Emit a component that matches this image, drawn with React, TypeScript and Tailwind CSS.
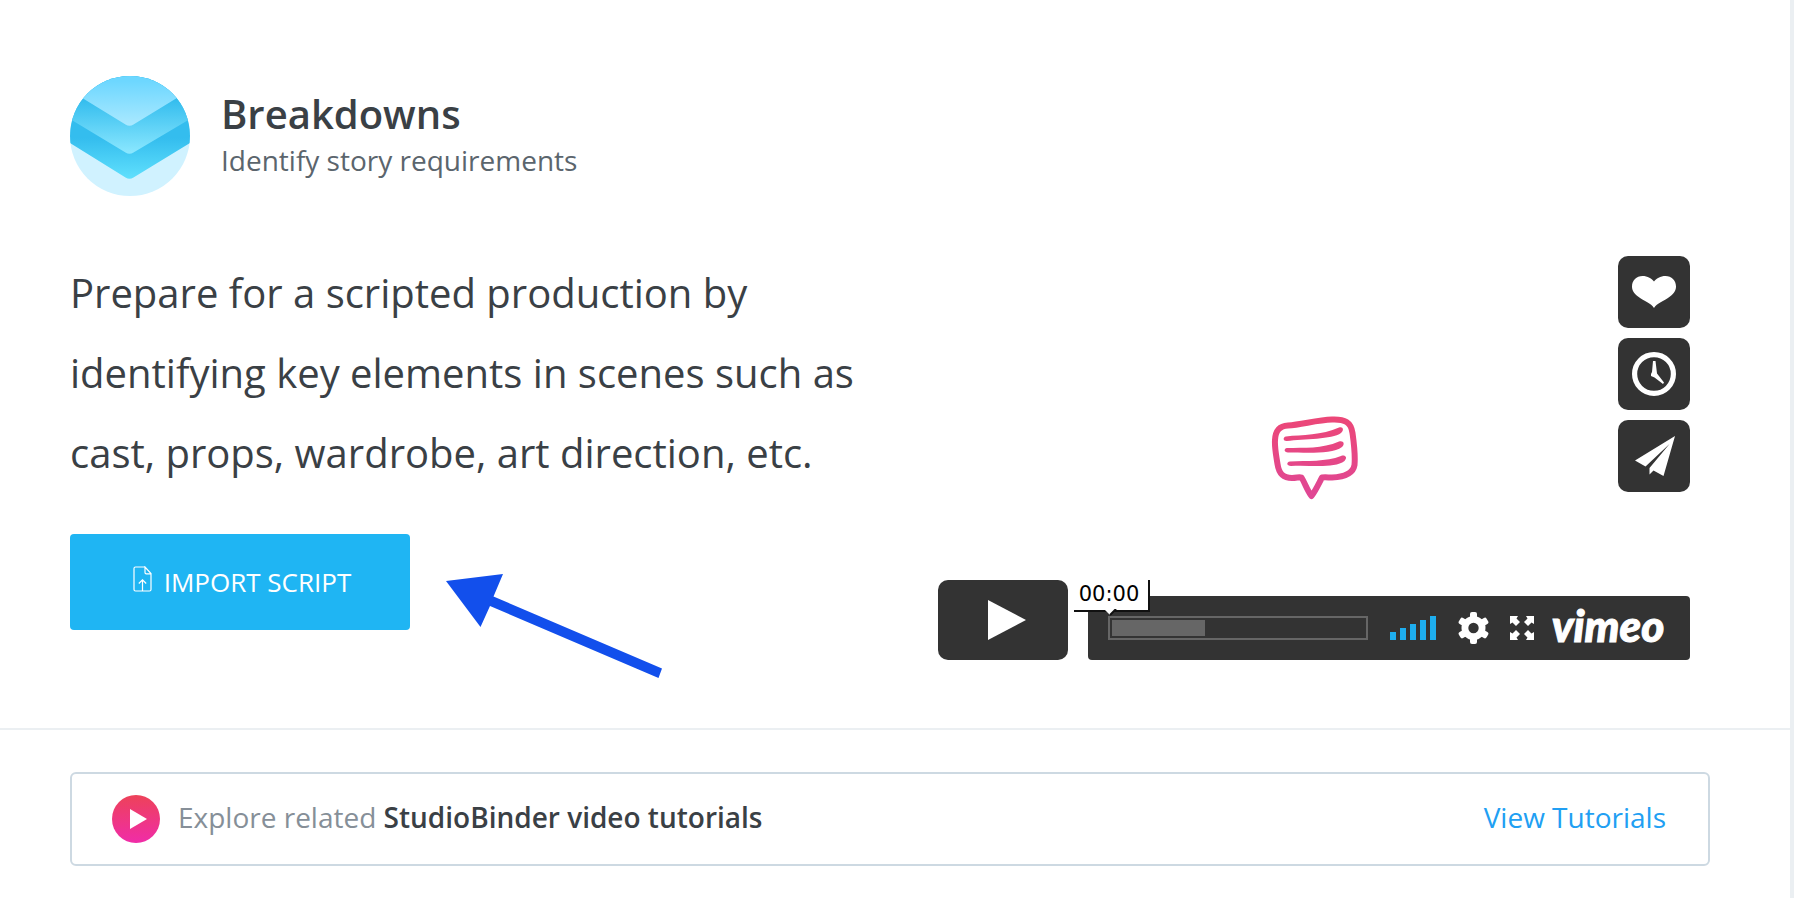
const sideButton =
  "flex size-[72px] cursor-pointer items-center justify-center rounded-[10px] bg-[#333333]";

// round badge next to the page title
const BreakdownLogo: React.FC = () => (
  <svg className="size-[120px] shrink-0" viewBox="0 0 120 120" aria-hidden="true">
    <defs>
      <clipPath id="logoClip">
        <circle cx="60" cy="60" r="60" />
      </clipPath>
      <linearGradient id="layerTop" gradientUnits="userSpaceOnUse" x1="0" y1="0" x2="0" y2="50">
        <stop offset="0.1" stopColor="#6dd7ff" />
        <stop offset="1" stopColor="#abe9ff" />
      </linearGradient>
      <linearGradient id="layerMiddle" gradientUnits="userSpaceOnUse" x1="0" y1="24" x2="0" y2="78">
        <stop offset="0" stopColor="#34bdee" />
        <stop offset="1" stopColor="#8ce8ff" />
      </linearGradient>
      <linearGradient id="layerBottom" gradientUnits="userSpaceOnUse" x1="0" y1="62" x2="0" y2="103">
        <stop offset="0" stopColor="#34bdee" />
        <stop offset="1" stopColor="#60e0fd" />
      </linearGradient>
    </defs>
    <g clipPath="url(#logoClip)">
      <rect width="120" height="120" fill="#d0f2ff" />
      <path d="M0 0H120V67L63.500 101.500Q59.500 104 55.500 101.500L0 67Z" fill="url(#layerBottom)" />
      <path d="M0 0H120V43L63.500 76.500Q59.500 79 55.500 76.500L0 43Z" fill="url(#layerMiddle)" />
      <path d="M0 0H120V14L63.500 48.500Q59.500 51 55.500 48.500L0 14.500Z" fill="url(#layerTop)" />
    </g>
  </svg>
);

const FileUploadIcon: React.FC = () => (
  <svg className="mb-1.5 h-[26px] w-[19px]" viewBox="0 0 19 26" fill="none" stroke="white" aria-hidden="true">
    <path d="M11.700 1H2.500Q1 1 1 2.500V23.500Q1 25 2.500 25H16.500Q18 25 18 23.500V7.500L12 1V6.500Q12 7.800 13.300 7.800H18" strokeWidth="1.200" />
    <path d="M9.500 25V14M5.800 17.500L9.500 13.800L13.200 17.500" strokeWidth="1.200" />
  </svg>
);

const ChatBubble: React.FC = () => (
  <svg className="mt-40 h-[84px] w-[88px]" viewBox="-2 0 88 84" fill="none" strokeLinecap="round" strokeLinejoin="round" aria-hidden="true">
    <defs>
      <linearGradient id="bubblePink" gradientUnits="userSpaceOnUse" x1="0" y1="0" x2="0" y2="84">
        <stop offset="0" stopColor="#ec4777" />
        <stop offset="1" stopColor="#df4796" />
      </linearGradient>
    </defs>
    <g stroke="url(#bubblePink)">
      <path d="M16 9.500C30 8.500 45 4 60 3.500C73 3 79 6 80.500 17C82 28 83.500 38 82.500 49C81 58 72 61 60 61.500C56.500 61.500 53 61 50 61.500C47 67 44 74 39.500 80C35 74 33 67 29.500 61.500C27 60.500 25 62 20 62C11 62 7 58 5.500 48C4 38 2.500 32 3 24C3.500 14 8 10 16 9.500Z" strokeWidth="6" />
    </g>
    <g fill="url(#bubblePink)">
      <path d="M14 20.500C30 18.500 50 19.500 67 11.500C71 10 72.500 14 69 17C60 23.500 32 23 15 25C11 25.500 10.500 21 14 20.500Z" />
      <path d="M15 32C32 31.500 50 33 67 25.500C71 24 73.500 27.500 70 31C60 38.500 34 36.500 16 36.500C12 36.500 11.500 32.500 15 32Z" />
      <path d="M18 45.500C35 44.500 54 46 69 40C73 38.500 76 41.500 72.500 45C62 53 36 48.500 19 50C14.500 50 14 46 18 45.500Z" />
    </g>
  </svg>
);

const VideoPlayer: React.FC = () => {
  return (
    <div className="flex flex-col pt-[3px]">
      <div className="grid grid-cols-[1fr_auto_1fr] items-start">
        <span />
        <ChatBubble />
        <div className="flex flex-col gap-2.5 justify-self-end">
          <button className={sideButton} aria-label="Like">
            <svg className="h-8 w-11" viewBox="0 0 44 32" fill="white">
              <path d="M22 32C19 27 12.500 25.500 6 20.500C1.500 17 0 14 0 10.500C0 4.500 4.500 0 10.500 0C15.500 0 20 2.500 22 5.500C24 2.500 28.500 0 33.500 0C39.500 0 44 4.500 44 10.500C44 14 42.500 17 38 20.500C31.500 25.500 25 27 22 32Z" />
            </svg>
          </button>
          <button className={sideButton} aria-label="Watch later">
            <svg className="size-11" viewBox="0 0 44 44" fill="white">
              <circle cx="22" cy="22" r="19.400" fill="none" stroke="white" strokeWidth="5.200" />
              <path d="M21 9H23.500L25 21.500L32 30.500L31 32L22.500 25.500L19 24L19 22L20 20Z" />
            </svg>
          </button>
          <button className={sideButton} aria-label="Share">
            <svg className="ml-0.5 h-10 w-10" viewBox="0 0 40 40" fill="white">
              <path d="M40 0L0 24.500L10.500 30.500L34.500 8L14.500 32L14.500 38.500L18.500 34.500L28.500 40Z" />
            </svg>
          </button>
        </div>
      </div>

      <div className="mt-20 flex items-end gap-5">
        <button className="flex h-20 w-[130px] shrink-0 cursor-pointer items-center justify-center rounded-[10px] bg-[#333333]" aria-label="Play">
          <svg className="ml-2 h-10 w-[38px]" viewBox="0 0 38 40" fill="white">
            <path d="M0 0L38 20L0 40Z" />
          </svg>
        </button>
        <div className="relative flex h-16 flex-1 items-center rounded bg-[#333333] pr-6 pl-5">
          <div className="absolute -top-4 -left-3.5 h-8 w-[76px] border-r-2 border-b-2 border-[#111111] bg-white pr-1 text-center font-['DejaVu_Sans',sans-serif] text-[21px] leading-[29px] text-black">
            00:00
            <svg className="absolute top-[29px] left-[29px] h-[7px] w-3.5" viewBox="0 0 14 7">
              <path d="M1 0H13L7 6Z" fill="white" />
              <path d="M13 0L7 6" stroke="#111111" strokeWidth="2" />
            </svg>
          </div>
          <input
            type="range"
            aria-label="Progress"
            defaultValue={0}
            className="h-6 min-w-0 flex-1 appearance-none border-2 border-[#666666] bg-[linear-gradient(#666666,#666666)] bg-[length:93px_16px] bg-[position:2px_2px] bg-no-repeat [&::-webkit-slider-thumb]:size-0 [&::-webkit-slider-thumb]:appearance-none"
          />
          <button className="ml-[22px] flex h-6 cursor-pointer items-end gap-1" aria-label="Volume">
            <span className="h-2 w-1.5 bg-[#1eaeef]" />
            <span className="h-3 w-1.5 bg-[#1eaeef]" />
            <span className="h-4 w-1.5 bg-[#1eaeef]" />
            <span className="h-5 w-1.5 bg-[#1eaeef]" />
            <span className="h-6 w-1.5 bg-[#1eaeef]" />
          </button>
          <button className="ml-[22px] cursor-pointer" aria-label="Settings">
            <svg className="block h-8 w-[31px]" viewBox="0 0 31 32">
              <g fill="white">
                <circle cx="15.500" cy="16" r="12" />
                <rect x="12" y="0" width="7" height="32" rx="2" />
                <rect x="12" y="0" width="7" height="32" rx="2" transform="rotate(60 15.500 16)" />
                <rect x="12" y="0" width="7" height="32" rx="2" transform="rotate(120 15.500 16)" />
              </g>
              <circle cx="15.500" cy="16" r="5.200" fill="#333333" />
            </svg>
          </button>
          <button className="ml-[21px] cursor-pointer" aria-label="Fullscreen">
            <svg className="block size-6" viewBox="0 0 24 24">
              <path d="M0 0H8L6.500 2.500L10 6L6 10L2.500 6.500L0 8ZM24 0V8L21.500 6.500L18 10L14 6L17.500 2.500L16 0ZM0 24V16L2.500 17.500L6 14L10 18L6.500 21.500L8 24ZM24 24H16L17.500 21.500L14 18L18 14L21.500 17.500L24 16Z" fill="white" />
            </svg>
          </button>
          <a
            href="#vimeo"
            className="ml-4 flex w-[116px] justify-center pb-1.5 font-['Lato',sans-serif] text-[44px] leading-[56px] font-black text-white italic [-webkit-text-stroke:1px_white]"
          >
            vimeo
          </a>
        </div>
      </div>
    </div>
  );
};

const App: React.FC = () => {
  return (
    <div className="min-h-screen border-r-4 border-[#ebeff2] bg-white font-['Open_Sans',sans-serif] text-[#3a4045]">
      <main className="border-b-2 border-[#ebeff2] pt-[76px] pr-20 pb-[68px] pl-[70px]">
        <header className="flex items-center gap-[31px]">
          <BreakdownLogo />
          <div>
            <h1 className="text-[40px] leading-[48px] font-semibold">Breakdowns</h1>
            <p className="text-[28px] leading-[44px] text-[#5b656d]">Identify story requirements</p>
          </div>
        </header>

        <div className="mt-[57px] grid grid-cols-2">
          <div>
            <p className="text-[40px] leading-[80px]">
              Prepare for a scripted production by identifying key elements in scenes such as cast, props, wardrobe, art direction, etc.
            </p>
            <div className="relative mt-[41px] w-[340px]">
              <button className="flex h-24 w-full cursor-pointer items-center justify-center gap-3 rounded bg-[#1fb5f3] pl-1 text-[26px] text-white">
                <FileUploadIcon />
                IMPORT SCRIPT
              </button>
              {/* arrow pointing at the button */}
              <svg className="absolute top-10 left-[376px] h-[106px] w-[216px]" viewBox="0 0 216 106" aria-hidden="true">
                <path d="M0 7L57 0L47.500 22.500L216 94.500L212.500 104L44 32L34.500 53Z" fill="#124fec" />
              </svg>
            </div>
          </div>
          <div className="pr-5 pl-12">
            <VideoPlayer />
          </div>
        </div>
      </main>

      <footer className="pt-[42px] pr-20 pb-8 pl-[70px]">
        <div className="flex h-[94px] items-center rounded-md border-2 border-[#cdd9e2] pr-[42px] pl-10 text-[28px]">
          <svg className="size-12 shrink-0" viewBox="0 0 48 48" aria-hidden="true">
            <defs>
              <linearGradient id="playPink" x1="0" y1="0" x2="0" y2="1">
                <stop offset="0" stopColor="#ed4259" />
                <stop offset="1" stopColor="#f02ca8" />
              </linearGradient>
            </defs>
            <circle cx="24" cy="24" r="24" fill="url(#playPink)" />
            <path d="M18 14L35 24L18 34Z" fill="white" />
          </svg>
          <p className="ml-[18px] pb-1 text-[#868f98]">
            Explore related <span className="font-semibold text-[#3a4045]">StudioBinder video tutorials</span>
          </p>
          <a href="#tutorials" className="ml-auto pb-1 text-[#219ff3]">
            View Tutorials
          </a>
        </div>
      </footer>
    </div>
  );
};

export default App;
